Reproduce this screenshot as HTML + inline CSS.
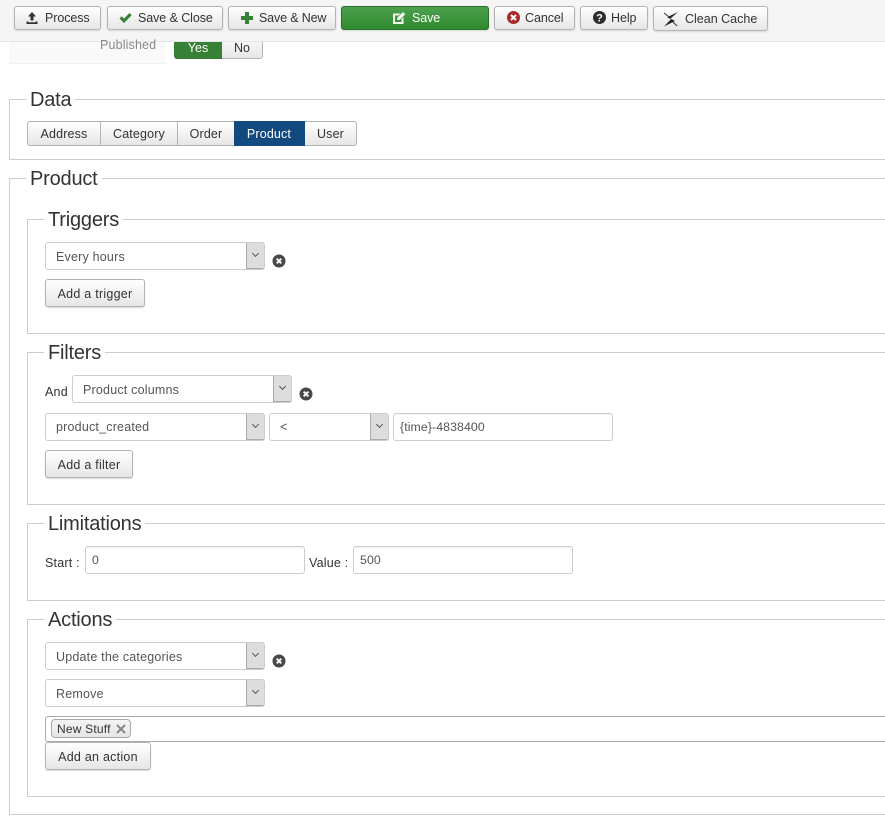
<!DOCTYPE html>
<html><head><meta charset="utf-8">
<style>
html,body{margin:0;padding:0;background:#fff}
body{position:relative;width:885px;height:821px;overflow:hidden;font-family:"Liberation Sans",Arial,sans-serif;font-size:12.5px;color:#333}
div,span,svg{position:absolute;box-sizing:border-box}
.t{white-space:nowrap;line-height:16px}
.tb{height:24px;top:6px;border:1px solid #b3b3b3;border-radius:3px;background:linear-gradient(#fff,#e6e6e6);box-shadow:0 1px 2px rgba(0,0,0,.12)}
.tb .t{top:3px;color:#333;letter-spacing:-.08px}
.g{background:linear-gradient(#4da14d,#2f8a2f);border-color:#2a6f2a}
.fs{border:1px solid #ccc;border-right:0}
.lg{background:#fff;font-size:20px;line-height:26px;color:#333;padding:0 4px;white-space:nowrap;letter-spacing:-.2px}
.btn{border:1px solid #b3b3b3;border-radius:3px;background:linear-gradient(#fff,#e6e6e6);height:28px;box-shadow:0 1px 1px rgba(0,0,0,.15);text-align:center;line-height:28px;color:#333;letter-spacing:.25px;white-space:nowrap}
.sel{height:28px;border:1px solid #ccc;border-radius:3px;background:#fff;color:#555;line-height:28px;padding-left:10px;letter-spacing:.2px;white-space:nowrap;font-size:12.5px}
.sel i{position:absolute;right:0;top:0;bottom:0;width:17px;background:#ddd;border-left:1px solid #aaa;border-bottom:1px solid #aaa;border-radius:0 2px 2px 0}
.sel i:after{content:"";position:absolute;left:6px;top:8px;width:4px;height:4px;border-right:1px solid #555;border-bottom:1px solid #555;transform:rotate(45deg)}
.inp{height:28px;border:1px solid #ccc;border-radius:3px;background:#fff;color:#555;line-height:27px;padding-left:6px;letter-spacing:.1px;font-size:12.3px;box-shadow:inset 0 1px 1px rgba(0,0,0,.05)}
.x{width:14px;height:14px}
.lb{color:#333;white-space:nowrap;line-height:16px;letter-spacing:.2px}
.tab{top:121px;height:25px;border:1px solid #b3b3b3;border-left:0;background:linear-gradient(#fff,#e6e6e6);text-align:center;line-height:24px;color:#333;letter-spacing:.15px}
</style></head><body>

<div style="left:0;top:0;width:885px;height:42px;background:#f5f5f5;border-bottom:1px solid #e5e5e5"></div>

<div class="tb" style="left:14px;width:87px"><svg style="left:10px;top:4px" width="14" height="14" viewBox="0 0 14 14"><path d="M7 1L11 5.500H8.500V9.500H5.500V5.500H3ZM1.500 10.500H3.500V11.200H10.500V10.500H12.500V13H1.500Z" fill="#333"/></svg><span class="t" style="left:30px">Process</span></div>
<div class="tb" style="left:107px;width:116px"><svg style="left:10px;top:4px" width="15" height="14" viewBox="0 0 15 14"><path d="M1.500 7.500L3.700 5.300L6 7.600L11.500 2L13.700 4.200L6 12Z" fill="#378137"/></svg><span class="t" style="left:30px">Save &amp; Close</span></div>
<div class="tb" style="left:228px;width:108px"><svg style="left:11px;top:4px" width="14" height="14" viewBox="0 0 14 14"><path d="M5 1H9V5H13V9H9V13H5V9H1V5H5Z" fill="#378137"/></svg><span class="t" style="left:30px;letter-spacing:-.15px">Save &amp; New</span></div>
<div class="tb g" style="left:341px;width:148px"><svg style="left:50px;top:4px" width="14" height="14" viewBox="0 0 14 14"><path d="M1 2.500H8.500L6.500 4.500H3V11H9.500V8L11.500 6V13H1ZM11 1L13.300 3.300L7.500 9H5.200V6.800Z" fill="#f3f8f3"/></svg><span class="t" style="left:70px;color:#fff">Save</span></div>
<div class="tb" style="left:494px;width:81px"><svg style="left:11px;top:3px" width="15" height="15" viewBox="0 0 15 15"><circle cx="7.500" cy="7.500" r="6.500" fill="#a92a2a"/><path d="M5 5L10 10M10 5L5 10" stroke="#fff" stroke-width="2"/></svg><span class="t" style="left:30px">Cancel</span></div>
<div class="tb" style="left:580px;width:68px"><svg style="left:11px;top:3px" width="15" height="15" viewBox="0 0 15 15"><circle cx="7.500" cy="7.500" r="6.500" fill="#2d2d2d"/><text x="7.500" y="11.500" text-anchor="middle" font-size="11" font-weight="bold" fill="#fff" font-family="Liberation Sans">?</text></svg><span class="t" style="left:30px">Help</span></div>
<div class="tb" style="left:653px;width:115px;height:25px"><svg style="left:8px;top:4px" width="18" height="17" viewBox="0 0 18 17"><path d="M16 1L5 6.300L9 8.300L2 15.500L13 10L8.500 7.500Z" fill="#222"/><path d="M2 2L6.500 5.500M11 11L15 15" stroke="#333" stroke-width="1"/></svg><span class="t" style="left:31px;top:4px;letter-spacing:0">Clean Cache</span></div>

<div style="left:9px;top:42px;width:156px;height:22px;background:#f9f9f9;border-bottom:1px solid #f0f0f0"></div>
<div class="t" style="left:100px;top:37px;color:#888;letter-spacing:.15px">Published</div>
<div style="left:174px;top:42px;width:48px;height:17px;background:#378137;border-radius:0 0 0 3px;color:#fff;text-align:center;line-height:12px">Yes</div>
<div style="left:222px;top:42px;width:41px;height:17px;border:1px solid #b3b3b3;border-top:0;border-left:0;border-radius:0 0 3px 0;background:linear-gradient(#f6f6f6,#e6e6e6);text-align:center;line-height:12px;color:#333">No</div>

<!-- Data -->
<div class="fs" style="left:9px;top:99px;width:890px;height:61px"></div>
<div class="lg" style="left:26px;top:87px">Data</div>
<div class="tab" style="left:27px;width:74px;border-left:1px solid #b3b3b3;border-radius:3px 0 0 3px">Address</div>
<div class="tab" style="left:101px;width:77px">Category</div>
<div class="tab" style="left:178px;width:57px">Order</div>
<div class="tab" style="left:234px;width:71px;background:#124a80;border-color:#124a80;color:#fff">Product</div>
<div class="tab" style="left:305px;width:52px;border-radius:0 3px 3px 0">User</div>

<!-- Product -->
<div class="fs" style="left:9px;top:178px;width:890px;height:637px"></div>
<div class="lg" style="left:26px;top:166px">Product</div>

<!-- Triggers -->
<div class="fs" style="left:27px;top:219px;width:870px;height:115px"></div>
<div class="lg" style="left:44px;top:207px">Triggers</div>
<div class="sel" style="left:45px;top:242px;width:220px">Every hours<i></i></div>
<svg class="x" style="left:272px;top:254px" viewBox="0 0 14 14"><circle cx="7" cy="7" r="6.500" fill="#484848"/><path d="M4.700 4.700L9.300 9.300M9.300 4.700L4.700 9.300" stroke="#fff" stroke-width="2"/></svg>
<div class="btn" style="left:45px;top:279px;width:100px">Add a trigger</div>

<!-- Filters -->
<div class="fs" style="left:27px;top:352px;width:870px;height:153px"></div>
<div class="lg" style="left:44px;top:340px">Filters</div>
<div class="lb" style="left:45px;top:384px">And</div>
<div class="sel" style="left:72px;top:375px;width:220px">Product columns<i></i></div>
<svg class="x" style="left:299px;top:387px" viewBox="0 0 14 14"><circle cx="7" cy="7" r="6.500" fill="#484848"/><path d="M4.700 4.700L9.300 9.300M9.300 4.700L4.700 9.300" stroke="#fff" stroke-width="2"/></svg>
<div class="sel" style="left:45px;top:413px;width:220px;line-height:27px">product_created<i></i></div>
<div class="sel" style="left:269px;top:413px;width:120px;line-height:27px">&lt;<i></i></div>
<div class="inp" style="left:393px;top:413px;width:220px">{time}-4838400</div>
<div class="btn" style="left:45px;top:450px;width:88px">Add a filter</div>

<!-- Limitations -->
<div class="fs" style="left:27px;top:523px;width:870px;height:78px"></div>
<div class="lg" style="left:44px;top:511px">Limitations</div>
<div class="lb" style="left:45px;top:555px">Start :</div>
<div class="inp" style="left:85px;top:546px;width:220px">0</div>
<div class="lb" style="left:309px;top:555px">Value :</div>
<div class="inp" style="left:353px;top:546px;width:220px">500</div>

<!-- Actions -->
<div class="fs" style="left:27px;top:619px;width:870px;height:178px"></div>
<div class="lg" style="left:44px;top:607px">Actions</div>
<div class="sel" style="left:45px;top:642px;width:220px">Update the categories<i></i></div>
<svg class="x" style="left:272px;top:654px" viewBox="0 0 14 14"><circle cx="7" cy="7" r="6.500" fill="#484848"/><path d="M4.700 4.700L9.300 9.300M9.300 4.700L4.700 9.300" stroke="#fff" stroke-width="2"/></svg>
<div class="sel" style="left:45px;top:679px;width:220px">Remove<i></i></div>
<div style="left:45px;top:716px;width:860px;height:26px;border:1px solid #aaa;border-radius:3px;background:#fff"></div>
<div style="left:51px;top:719px;width:80px;height:19px;border:1px solid #aaa;border-radius:4px;background:linear-gradient(#f4f4f4,#e6e6e6);line-height:19px;padding-left:5px;font-size:12px;letter-spacing:.2px;color:#333;white-space:nowrap">New Stuff<svg style="left:64px;top:4px" width="10" height="10" viewBox="0 0 10 10"><path d="M1 1L9 9M9 1L1 9" stroke="#888" stroke-width="2"/></svg></div>
<div class="btn" style="left:45px;top:742px;width:106px">Add an action</div>

</body></html>
